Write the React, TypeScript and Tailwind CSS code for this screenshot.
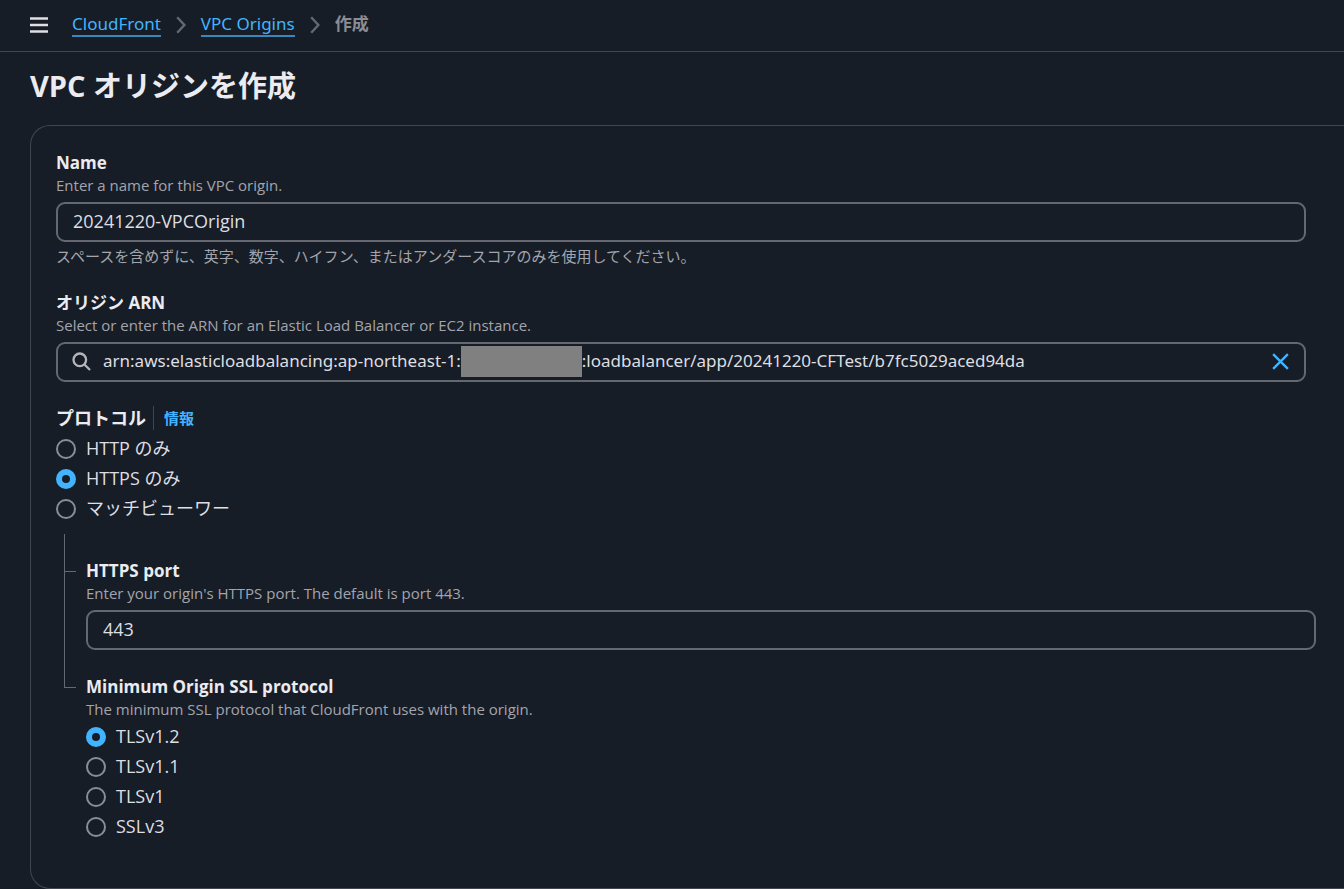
import { useState } from "react";
import type { ReactNode } from "react";

const fieldBox =
  "h-10 w-full rounded-[9px] border-2 border-[#656871] bg-[#161d26] pb-[2px] text-[#dedee3] outline-none focus:border-[#42b4ff]";

const labelText = "block pt-px text-[17px] leading-[23px] font-bold text-[#ebebf0]";

function FieldLabel({ htmlFor, children }: { htmlFor: string; children: ReactNode }) {
  return (
    <label htmlFor={htmlFor} className={labelText}>
      {children}
    </label>
  );
}

function Description({ children }: { children: ReactNode }) {
  return <p className="pb-[2px] text-[15px] leading-[22px] text-[#a4a4ad]">{children}</p>;
}

function Radio({
  name,
  label,
  checked,
  onSelect,
}: {
  name: string;
  label: string;
  checked: boolean;
  onSelect: () => void;
}) {
  return (
    <label className="flex h-[30px] items-center gap-[10px] text-[18px] leading-[28px] text-[#dedee3]">
      <input
        type="radio"
        name={name}
        checked={checked}
        onChange={onSelect}
        className="size-5 shrink-0 appearance-none rounded-full border-2 border-[#8c8c94] bg-[#161d26] checked:border-[6px] checked:border-[#42b4ff]"
      />
      <span className="pb-[2px]">{label}</span>
    </label>
  );
}

function Chevron() {
  return (
    <svg width="10" height="18" viewBox="0 0 10 18" fill="none" stroke="#656871" strokeWidth="2.4" aria-hidden="true">
      <path d="M1.2 1.2 8.4 9l-7.2 7.8" />
    </svg>
  );
}

const protocols = ["HTTP のみ", "HTTPS のみ", "マッチビューワー"];
const sslProtocols = ["TLSv1.2", "TLSv1.1", "TLSv1", "SSLv3"];

export default function App() {
  const [name, setName] = useState("20241220-VPCOrigin");
  const [arnPrefix, setArnPrefix] = useState("arn:aws:elasticloadbalancing:ap-northeast-1:");
  const [arnSuffix, setArnSuffix] = useState(":loadbalancer/app/20241220-CFTest/b7fc5029aced94da");
  const [protocol, setProtocol] = useState("HTTPS のみ");
  const [port, setPort] = useState("443");
  const [ssl, setSsl] = useState("TLSv1.2");

  return (
    <div className="min-h-screen overflow-x-hidden bg-[#161d26] font-['Open_Sans','Noto_Sans_CJK_JP',sans-serif] text-[#dedee3]">
      <header className="flex h-[52px] items-center border-b border-[#424650] pb-[2px] pl-[30px]">
        <button type="button" aria-label="メニュー" className="mr-6">
          <svg width="18" height="16" viewBox="0 0 18 16" stroke="#dedee3" strokeWidth="2.4" aria-hidden="true">
            <path d="M0 1.5h18M0 8h18M0 14.5h18" />
          </svg>
        </button>
        <nav aria-label="パンくずリスト">
          <ol className="flex items-center gap-[15px] font-['Noto_Sans','Noto_Sans_CJK_JP',sans-serif] text-[17px] leading-6">
            <li>
              <a href="#cloudfront" className="block border-b-2 border-[#3a86bd] leading-[22px] text-[#42b4ff]">
                CloudFront
              </a>
            </li>
            <li>
              <Chevron />
            </li>
            <li>
              <a href="#vpc-origins" className="block border-b-2 border-[#3a86bd] leading-[22px] text-[#42b4ff]">
                VPC Origins
              </a>
            </li>
            <li>
              <Chevron />
            </li>
            <li className="pb-[2px] font-bold text-[#8c8c94]">作成</li>
          </ol>
        </nav>
      </header>

      <main className="pl-[30px]">
        <h1 className="pt-4 pb-[21px] text-[29px] leading-9 font-bold text-[#ebebf0]">VPC オリジンを作成</h1>

        <form className="rounded-l-[20px] border border-r-0 border-[#424650] pt-6 pr-7 pb-[46px] pl-[25px]">
          <div className="flex flex-col gap-6 pr-[10px]">
            <div>
              <FieldLabel htmlFor="origin-name">Name</FieldLabel>
              <Description>Enter a name for this VPC origin.</Description>
              <input
                id="origin-name"
                type="text"
                value={name}
                onChange={(e) => setName(e.target.value)}
                className={`${fieldBox} mt-1 block px-[15px] text-[18px]`}
              />
              <p className="mt-1 text-[15px] leading-5 text-[#a4a4ad]">
                スペースを含めずに、英字、数字、ハイフン、またはアンダースコアのみを使用してください。
              </p>
            </div>

            <div>
              <FieldLabel htmlFor="origin-arn">オリジン ARN</FieldLabel>
              <Description>Select or enter the ARN for an Elastic Load Balancer or EC2 instance.</Description>
              <div
                className={`${fieldBox} mt-1 flex items-center pr-[15px] pl-[14px] font-['Noto_Sans','Noto_Sans_CJK_JP',sans-serif] text-[17px]`}
              >
                <svg width="19" height="19" viewBox="0 0 19 19" fill="none" stroke="#b4b4bb" strokeWidth="2.3" className="mr-3 shrink-0" aria-hidden="true">
                  <circle cx="7.8" cy="7.8" r="6.3" />
                  <path d="m12.2 12.2 5.8 5.8" />
                </svg>
                <input
                  id="origin-arn"
                  type="text"
                  value={arnPrefix}
                  onChange={(e) => setArnPrefix(e.target.value)}
                  className="field-sizing-content bg-transparent outline-none"
                />
                <span className="h-[31px] w-[121px] shrink-0 bg-[#808080]" />
                <input
                  type="text"
                  aria-label="ARN リソース"
                  value={arnSuffix}
                  onChange={(e) => setArnSuffix(e.target.value)}
                  className="min-w-0 flex-1 bg-transparent outline-none"
                />
                <button
                  type="button"
                  aria-label="クリア"
                  onClick={() => {
                    setArnPrefix("");
                    setArnSuffix("");
                  }}
                >
                  <svg width="17" height="17" viewBox="0 0 18 18" stroke="#42b4ff" strokeWidth="2.5" aria-hidden="true">
                    <path d="m1.2 1.2 15.6 15.6M16.8 1.2 1.2 16.8" />
                  </svg>
                </button>
              </div>
            </div>

            <div role="radiogroup" aria-labelledby="protocol-label">
              <div className="mb-1 flex h-6 items-center">
                <span id="protocol-label" className="text-[18px] leading-6 font-bold text-[#ebebf0]">
                  プロトコル
                </span>
                <a
                  href="#info"
                  className="ml-[7px] border-l border-[#424650] pl-[10px] text-[15px] leading-6 font-bold text-[#42b4ff]"
                >
                  情報
                </a>
              </div>
              {protocols.map((item) => (
                <Radio
                  key={item}
                  name="protocol"
                  label={item}
                  checked={protocol === item}
                  onSelect={() => setProtocol(item)}
                />
              ))}
            </div>
          </div>

          <div className="mt-[10px] flex flex-col pl-2">
            <div className="flex">
              <div className="flex w-[22px] shrink-0 flex-col">
                <div className="h-[38px] w-3 border-b border-l border-[#656871]" />
                <div className="w-3 flex-1 border-l border-[#656871]" />
              </div>
              <div className="min-w-0 flex-1 pt-6 pb-6">
                <FieldLabel htmlFor="https-port">HTTPS port</FieldLabel>
                <Description>Enter your origin's HTTPS port. The default is port 443.</Description>
                <input
                  id="https-port"
                  type="text"
                  inputMode="numeric"
                  value={port}
                  onChange={(e) => setPort(e.target.value)}
                  className={`${fieldBox} mt-1 block px-[15px] text-[18px]`}
                />
              </div>
            </div>
            <div className="flex">
              <div className="w-[22px] shrink-0">
                <div className="h-[14px] w-3 border-b border-l border-[#656871]" />
              </div>
              <div role="radiogroup" aria-labelledby="ssl-label" className="min-w-0 flex-1">
                <p id="ssl-label" className={labelText}>
                  Minimum Origin SSL protocol
                </p>
                <Description>The minimum SSL protocol that CloudFront uses with the origin.</Description>
                {sslProtocols.map((item) => (
                  <Radio key={item} name="ssl" label={item} checked={ssl === item} onSelect={() => setSsl(item)} />
                ))}
              </div>
            </div>
          </div>
        </form>
      </main>
    </div>
  );
}
